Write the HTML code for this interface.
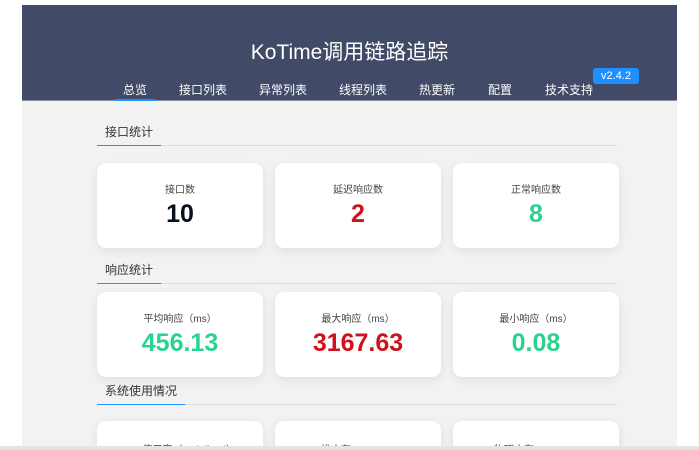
<!DOCTYPE html>
<html><head><meta charset="utf-8"><style>
*{margin:0;padding:0;box-sizing:border-box}
html,body{width:699px;height:450px;overflow:hidden}
body{background:#fff;font-family:"Liberation Sans","Noto Sans CJK SC",sans-serif;position:relative}
.panel{position:absolute;left:22px;top:5px;width:655px;height:441px;background:#f2f2f2;overflow:hidden}
.hdr{position:absolute;left:0;top:0;width:655px;height:96px;background:#414a66;border-bottom:1px solid #8a90a0}
.title{position:absolute;left:0;width:655px;top:31px;text-align:center;color:#fff;font-size:21px}
.nav{position:absolute;top:76px;font-size:12px;color:#fff}
.ul{position:absolute;left:93px;top:94px;width:40px;height:2px;background:#1e90ff}
.badge{position:absolute;left:571px;top:63px;width:46px;height:16px;background:#1e90ff;border-radius:3px;color:#fff;font-size:11px;text-align:center;line-height:16px}
.sec{position:absolute;left:75px;width:520px;border-bottom:1px solid #dcdcdc;font-size:12px;color:#333}
.sec span{display:inline-block;padding:0 8px 5px 8px;border-bottom:1px solid #1e90ff;margin-bottom:-1px}
.card{position:absolute;width:166px;height:85px;background:#fff;border-radius:9px;box-shadow:0 3px 10px rgba(0,0,0,.08);text-align:center}
.lb{position:absolute;top:18px;width:100%;font-size:10px;color:#444}
.vl{position:absolute;top:37px;width:100%;font-size:25px;font-weight:bold}
.bot{position:absolute;left:0;top:446px;width:699px;height:4px;background:#e4e4e4}
</style></head><body>
<div class="panel">
<div class="hdr">
<div class="title">KoTime调用链路追踪</div>
<div class="nav" style="left:101px">总览</div>
<div class="nav" style="left:157px">接口列表</div>
<div class="nav" style="left:237px">异常列表</div>
<div class="nav" style="left:317px">线程列表</div>
<div class="nav" style="left:397px">热更新</div>
<div class="nav" style="left:466px">配置</div>
<div class="nav" style="left:523px">技术支持</div>
<div class="ul"></div>
<div class="badge">v2.4.2</div>
</div>
<div class="sec" style="top:118px"><span>接口统计</span></div>
<div class="card" style="left:75px;top:158px"><div class="lb">接口数</div><div class="vl" style="color:#0a0f1f">10</div></div>
<div class="card" style="left:253px;top:158px"><div class="lb">延迟响应数</div><div class="vl" style="color:#d0101a">2</div></div>
<div class="card" style="left:431px;top:158px"><div class="lb">正常响应数</div><div class="vl" style="color:#29d38e">8</div></div>
<div class="sec" style="top:256px"><span>响应统计</span></div>
<div class="card" style="left:75px;top:287px"><div class="lb">平均响应（ms）</div><div class="vl" style="color:#29d38e">456.13</div></div>
<div class="card" style="left:253px;top:287px"><div class="lb">最大响应（ms）</div><div class="vl" style="color:#d0101a">3167.63</div></div>
<div class="card" style="left:431px;top:287px"><div class="lb">最小响应（ms）</div><div class="vl" style="color:#29d38e">0.08</div></div>
<div class="sec" style="top:377px"><span>系统使用情况</span></div>
<div class="card" style="left:75px;top:416px"><div class="lb" style="top:20px">CPU使用率（undefined）:</div></div>
<div class="card" style="left:253px;top:416px"><div class="lb" style="top:20px">堆内存：<b style="color:#29d38e">13.00%</b></div></div>
<div class="card" style="left:431px;top:416px"><div class="lb" style="top:20px">物理内存：<b style="color:#d0101a">59.36%</b></div></div>
</div>
<div class="bot"></div>
</body></html>
